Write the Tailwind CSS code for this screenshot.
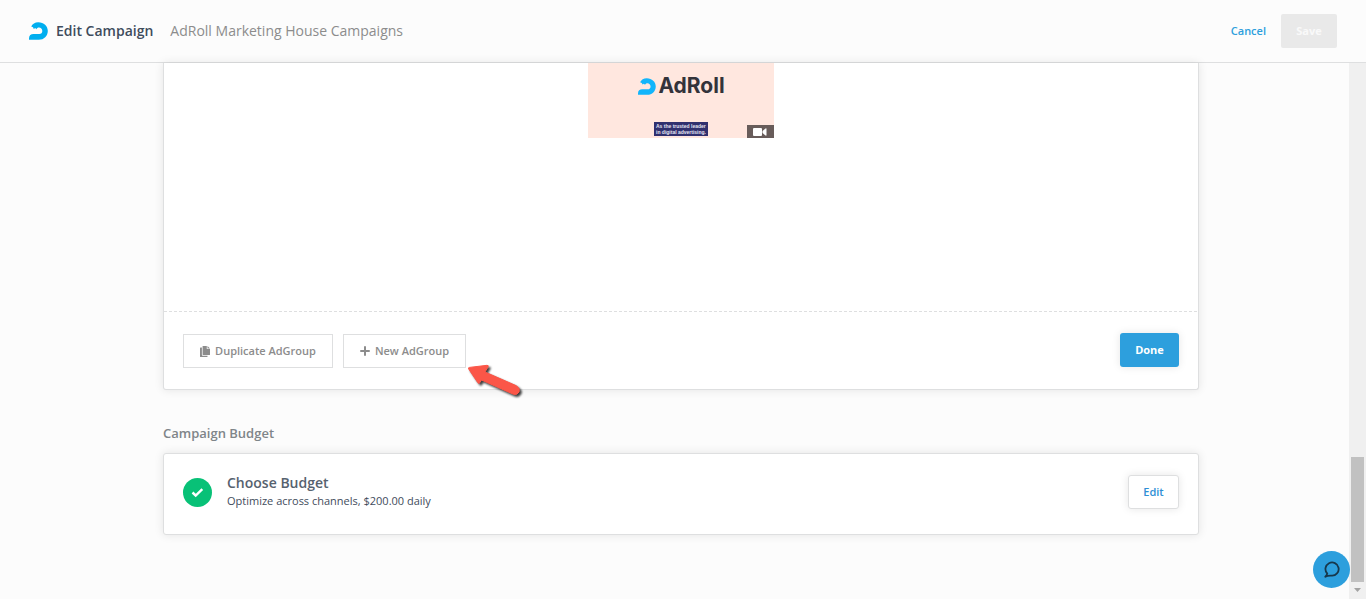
<!DOCTYPE html>
<html lang="en">
  <head>
    <meta charset="UTF-8" />
    <meta name="viewport" content="width=device-width, initial-scale=1.0" />
    <title>Edit Campaign</title>
    <script src="https://cdn.jsdelivr.net/npm/@tailwindcss/browser@4"></script>
  </head>
  <body class="h-screen overflow-hidden flex flex-col bg-[#fcfcfc] font-['Open_Sans',sans-serif] text-[#3f4c5c]">
    <!-- Header -->
    <header class="flex shrink-0 items-center justify-between border-b border-[#dedfe0] py-3.5 pl-7 pr-[29px]">
      <div class="flex items-center">
        <svg class="w-5 h-[18px] mr-2" viewBox="0 0 20 18" fill="#00aeef" aria-hidden="true">
          <path d="M3.200 4.600C4.400 1.900 7 .2 10.300 .2C15.800 .2 19.800 4 19.800 9C19.800 14 16 17.800 10.800 17.800H1V16.500C1 13.400 2.800 12 5.500 12H11.300C13.200 12 14.300 10.800 14.300 9C14.300 7 12.800 5.600 11 5.600C9.800 5.600 8.800 6.200 8.400 7.200L7.200 6.100L5.800 6.900L5 5.200Z" />
        </svg>
        <h1 class="text-sm font-semibold mr-[17px]">Edit Campaign</h1>
        <span class="text-sm text-[#8c8c8c]">AdRoll Marketing House Campaigns</span>
      </div>
      <div class="flex items-center gap-[15px]">
        <a href="#" class="text-[11px] font-semibold text-[#2d9fdd]">Cancel</a>
        <button disabled class="h-[34px] w-14 rounded-xs bg-[#e9e9e9] text-[11px] font-bold text-[#f9f9f9]">Save</button>
      </div>
    </header>

    <div class="flex flex-1 min-h-0">
      <main class="flex-1 pl-[163px] pr-[150px]">
        <!-- AdGroups -->
        <section class="relative rounded-b-[3px] border border-t-0 border-[#dedfe0] bg-white shadow-[0_0_10px_rgba(0,0,0,0.1)]">
          <div class="flex h-[248px] items-start justify-center">
            <div class="relative flex h-[75px] w-[186px] flex-col items-center justify-between bg-[#ffe7df] pt-[11px] pb-0.5">
              <div class="flex items-center gap-0.5">
                <svg class="w-[19px] h-[17px]" viewBox="0 0 20 18" fill="#12b5fb" aria-hidden="true">
                  <path d="M3.200 4.600C4.400 1.900 7 .2 10.300 .2C15.800 .2 19.800 4 19.800 9C19.800 14 16 17.800 10.800 17.800H1V16.500C1 13.400 2.800 12 5.500 12H11.300C13.200 12 14.300 10.800 14.300 9C14.300 7 12.800 5.600 11 5.600C9.800 5.600 8.800 6.200 8.400 7.200L7.200 6.100L5.800 6.900L5 5.200Z" />
                </svg>
                <span class="font-['Inter',sans-serif] text-[21px] leading-6 font-bold text-[#33333a]">AdRoll</span>
              </div>
              <p class="w-[54px] bg-[#30306e] px-0.5 py-px font-['Liberation_Sans',sans-serif] text-[5px] leading-[6px] font-bold whitespace-nowrap text-[#e5e5f2]">As the trusted leader<br />in digital advertising.</p>
              <span class="absolute right-0 bottom-0 flex h-[13px] w-[27px] items-center justify-center bg-[#685c5a]">
                <svg class="w-3.5 h-2 -ml-0.5" viewBox="0 0 14 8" fill="#fff" aria-hidden="true">
                  <rect width="9" height="8" rx="1" />
                  <path d="M9.500 3L12.500 .5Q13.500 0 13.500 1V7Q13.500 8 12.500 7.500L9.500 5Z" />
                </svg>
              </span>
            </div>
          </div>
          <svg class="block h-px w-full" aria-hidden="true">
            <line x1="0" y1="0.5" x2="100%" y2="0.5" stroke="#dedfe0" stroke-dasharray="3 2" />
          </svg>
          <div class="flex items-center justify-between px-[19px] py-[21px]">
            <div class="flex gap-2.5 text-[11px] font-semibold text-[#8c8c8c]">
              <button class="mt-px flex h-[34px] w-[150px] items-center justify-center gap-[5px] border border-[#dedfe0]">
                <svg class="w-2.5 h-[11px]" viewBox="0 0 10 11" fill="currentColor" aria-hidden="true">
                  <path d="M2.600 0H6.800V3H10V8.400Q10 9 9.400 9H3.200Q2.600 9 2.600 8.400Z" />
                  <path d="M7.500 0L10 2.400H7.500Z" />
                  <path d="M1.900 1.500V9Q1.900 9.700 2.600 9.700H7.500V10.400Q7.500 11 6.900 11H.6Q0 11 0 10.400V2.100Q0 1.500.6 1.500Z" />
                </svg>
                Duplicate AdGroup
              </button>
              <button class="mt-px flex h-[34px] w-[123px] items-center justify-center gap-[5px] border border-[#dedfe0]">
                <svg class="w-2.5 h-2.5" viewBox="0 0 10 10" stroke="currentColor" stroke-width="2" stroke-linecap="round" aria-hidden="true">
                  <path d="M5 1V9M1 5H9" />
                </svg>
                New AdGroup
              </button>
            </div>
            <button class="mb-px h-[34px] w-[59px] rounded-[3px] bg-[#2d9fdd] text-[11px] font-bold text-white shadow-[0_0_8px_rgba(0,0,0,0.1)]">Done</button>
          </div>
          <!-- Pointer to the New AdGroup button -->
          <svg class="absolute left-[300px] bottom-[-14px] h-10 w-[62px] overflow-visible drop-shadow-[2px_2px_1px_rgba(0,0,0,0.75)]" viewBox="0 0 62 40" aria-hidden="true">
            <path d="M4.500 5Q4.500 4.500 5.500 4.400L23 2.300Q25 2.300 24 4L21 9L52.500 22.800Q56.500 25.500 55 29Q53 32.500 49.500 31.300L17.500 17L15.500 20Q14.500 21.200 13.700 19.500L4.700 6Z" fill="#fb5648" stroke="#fb5648" stroke-width="1" />
          </svg>
        </section>

        <!-- Budget -->
        <h2 class="mt-[33px] mb-2.5 text-[13px] leading-5 font-semibold text-[#7f8589]">Campaign Budget</h2>
        <section class="flex items-center justify-between rounded-[3px] border border-[#dedfe0] bg-white px-[19px] pt-[21px] pb-[25px] shadow-[0_0_10px_rgba(0,0,0,0.1)]">
          <div class="flex items-center gap-[15px]">
            <svg class="w-[29px] h-[29px]" viewBox="0 0 29 29" fill="none" aria-hidden="true">
              <circle cx="14.500" cy="14.500" r="14.500" fill="#08c177" />
              <path d="M9.500 14.500L12.700 17.500L19.300 11.200" stroke="#fff" stroke-width="2.400" />
            </svg>
            <div class="-my-1 pb-0.5">
              <h3 class="text-sm leading-5 font-semibold text-[#56626f]">Choose Budget</h3>
              <p class="text-[11px] leading-4">Optimize across channels, $200.00 daily</p>
            </div>
          </div>
          <button class="h-[34px] w-[51px] rounded-[3px] border border-[#dedfe0] bg-white text-[11px] font-semibold text-[#2d8fd5] shadow-[0_0_8px_rgba(0,0,0,0.1)]">Edit</button>
        </section>
      </main>

      <!-- Scrollbar -->
      <div class="flex w-[17px] flex-col items-center justify-end bg-[#f0f0f0]" aria-hidden="true">
        <div class="h-[125px] w-[13px] bg-[#c1c1c1]"></div>
        <svg class="h-[17px] w-[17px]" viewBox="0 0 17 17" fill="#a3a3a3"><path d="M5 6H12L8.500 10Z" /></svg>
      </div>
    </div>

    <button class="fixed right-4 bottom-[11px] flex h-[37px] w-[37px] items-center justify-center rounded-full bg-[#2d9fdd]" aria-label="Chat">
      <svg class="w-[17px] h-[17px]" viewBox="0 0 17 17" fill="none" stroke="#17374b" stroke-width="1.800" stroke-linejoin="round" aria-hidden="true">
        <path d="M4.300 12.600A6.600 6.600 0 1 1 8.500 14.600Q4.500 14.400 2.300 15.700Q3.800 14.300 4.300 12.600Z" />
      </svg>
    </button>
  </body>
</html>
